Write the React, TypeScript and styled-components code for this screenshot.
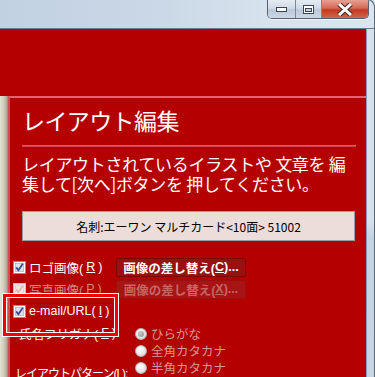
import React from "react";
import styled, { createGlobalStyle } from "styled-components";

const GlobalStyle = createGlobalStyle`
  html, body { margin: 0; padding: 0; overflow: hidden; background: #dbe5ef; }
  body { font-family: "Noto Sans CJK JP", "Noto Sans", sans-serif; }
  * { box-sizing: border-box; }
`;

const RED = "#b50000";
const UI_FONT = `"Liberation Sans", "Noto Sans CJK JP", sans-serif`;

const Window = styled.div`
  position: relative;
  width: 375px;
  height: 378px;
  margin-top: -1px;
  display: flex;
  flex-direction: column;
  background: linear-gradient(90deg, #c2d1e2 0%, #c9d7e6 40%, #d8e3ee 75%, #dbe5ef 100%);
  border-top-right-radius: 8px;
  border-right: 1px solid #5a6978;
  border-top: 1px solid #5a6978;
  overflow: hidden;
`;

const TitleBar = styled.div`
  flex-shrink: 0;
  height: 29px;
  display: flex;
  justify-content: flex-end;
  align-items: flex-start;
  padding-right: 5px;
  border-bottom: 1px solid #6d7b89;
`;

const CaptionGroup = styled.div`
  display: flex;
  height: 19px;
  border: 1px solid #58626e;
  border-top: none;
  border-radius: 0 0 5px 5px;
  overflow: hidden;
  box-shadow: 0 1px 0 rgba(255, 255, 255, 0.6);
`;

const CaptionButton = styled.div<{ $w: number; $close?: boolean }>`
  width: ${(p) => p.$w}px;
  height: 100%;
  display: flex;
  align-items: center;
  justify-content: center;
  background: ${(p) =>
    p.$close
      ? "linear-gradient(180deg, #e8a192 0%, #d46a55 45%, #c23a22 55%, #d2644a 100%)"
      : "linear-gradient(180deg, #e4ebf3 0%, #d0dbe7 45%, #bac8d8 55%, #cdd8e5 100%)"};
  & + & {
    border-left: 1px solid #7b8896;
  }
`;

const Body = styled.div`
  flex: 1;
  min-height: 0;
  display: flex;
  overflow: hidden;
`;

const Client = styled.div`
  width: 367px;
  display: flex;
  flex-direction: column;
  background: ${RED};
  border-right: 1px solid #8a9aab;
`;

const Frame = styled.div`
  flex: 1;
  background: linear-gradient(180deg, #d6e1ec 0%, #d6e1ec 55%, #c4d3e2 60%, #c8d6e4 100%);
`;

const TopBand = styled.div`
  flex-shrink: 0;
  height: 67px;
`;

const Lower = styled.div`
  flex: 1;
  display: flex;
`;

const Strip = styled.div`
  width: 8px;
  flex-shrink: 0;
  background: linear-gradient(90deg, #e3e1d4 0%, #d4d1c0 40%, #b9b5a0 75%, #8f8b78 100%);
`;

const Panel = styled.div`
  flex: 1;
  display: flex;
  flex-direction: column;
  border-top: 2px solid #e2646c;
  border-left: 2px solid #d84a52;
  color: #fff;
`;

const Title = styled.div`
  font-size: 23px;
  line-height: 28px;
  margin: 8px 0 0 12px;
  letter-spacing: -0.6px;
`;

const Separator = styled.div`
  height: 2px;
  margin: 11px 10px 0 12px;
  background: linear-gradient(180deg, #e0656a 0%, #c83a40 100%);
`;

const Description = styled.div`
  font-size: 17px;
  line-height: 20px;
  margin: 7px 10px 0 12px;
  letter-spacing: -0.3px;
  white-space: nowrap;
`;

const NameBox = styled.div`
  flex-shrink: 0;
  height: 30px;
  margin: 17px 11px 0 12px;
  background: #ecdcda;
  border: 1px solid #9c9c9c;
  color: #000;
  font-size: 12px;
  display: flex;
  align-items: center;
  justify-content: center;
`;

const Options = styled.div`
  display: flex;
  flex-direction: column;
  margin: 15px 0 0 3px;
`;

const Row = styled.div`
  flex-shrink: 0;
  height: 22px;
  display: flex;
  align-items: center;
`;

const CheckLabel = styled.label<{ $disabled?: boolean }>`
  display: flex;
  align-items: center;
  gap: 3px;
  width: 103px;
  font-family: ${UI_FONT};
  font-size: 12.5px;
  color: ${(p) => (p.$disabled ? "#d08a8a" : "#fff")};
  white-space: nowrap;
`;

const AccessKey = styled.span`
  text-decoration: underline;
`;

const ActionButton = styled.div<{ $disabled?: boolean }>`
  width: 130px;
  height: 19px;
  display: flex;
  align-items: center;
  justify-content: center;
  background: ${(p) => (p.$disabled ? "#a81414" : "#981010")};
  border: 1px solid ${(p) => (p.$disabled ? "#9a1010" : "#7c0606")};
  border-radius: 2px;
  color: ${(p) => (p.$disabled ? "#c86464" : "#fff")};
  font-family: ${UI_FONT};
  font-weight: bold;
  font-size: 12.5px;
  white-space: nowrap;
`;

const BottomArea = styled.div`
  display: grid;
  grid-template-columns: 103px auto;
  column-gap: 19px;
  align-items: start;
`;

const LeftColumn = styled.div`
  display: flex;
  flex-direction: column;
`;

const RadioList = styled.div`
  display: flex;
  flex-direction: column;
  padding-top: 3px;
`;

const RadioRow = styled.div`
  height: 17px;
  line-height: 17px;
  display: flex;
  align-items: center;
  gap: 4px;
  font-size: 12.5px;
  color: #d49a9a;
  white-space: nowrap;
`;

const RadioDot = styled.span<{ $checked?: boolean }>`
  width: 12px;
  height: 12px;
  border-radius: 50%;
  border: 1px solid #b4b4b4;
  background: radial-gradient(circle at 40% 35%, #ffffff 0%, #ececec 45%, #cfcfcf 100%);
  display: flex;
  align-items: center;
  justify-content: center;
  &::after {
    content: "";
    display: ${(p) => (p.$checked ? "block" : "none")};
    width: 6px;
    height: 6px;
    border-radius: 50%;
    background: radial-gradient(circle at 40% 35%, #c8c8c8 0%, #8e8e8e 100%);
  }
`;

const PatternLabel = styled.div`
  font-family: ${UI_FONT};
  font-size: 12px;
  line-height: 16px;
  margin: 22px 0 0 2px;
  letter-spacing: -1px;
  white-space: nowrap;
`;

const Highlight = styled.div`
  position: absolute;
  left: 3px;
  top: 294px;
  width: 115px;
  height: 42px;
  border: 3px solid #f00000;
  box-shadow: inset 0 0 0 1px #ffffff, 0 0 0 1px #ffffff;
`;

const CheckBox: React.FC<{ disabled?: boolean }> = ({ disabled }) => (
  <svg width="13" height="13" viewBox="0 0 13 13">
    <rect x="0.5" y="0.5" width="12" height="12" fill={disabled ? "#f2e6e6" : "#ffffff"} stroke={disabled ? "#d0b8b8" : "#8e8f8f"} />
    <rect x="2.5" y="2.5" width="8" height="8" fill={disabled ? "#efe6e6" : "#dfe4ea"} stroke={disabled ? "#e2d4d4" : "#b9c3ce"} />
    <path d="M3.2 6.4 L5.4 9.2 L9.8 2.8" fill="none" stroke={disabled ? "#d2bcbc" : "#3a4f8c"} strokeWidth="1.8" />
  </svg>
);

export default function App() {
  return (
    <>
      <GlobalStyle />
      <Window>
        <TitleBar>
          <CaptionGroup>
            <CaptionButton $w={27}>
              <svg width="11" height="5" viewBox="0 0 11 5">
                <rect x="0.5" y="0.5" width="10" height="4" fill="#fff" stroke="#3b4450" />
              </svg>
            </CaptionButton>
            <CaptionButton $w={26}>
              <svg width="11" height="9" viewBox="0 0 11 9">
                <rect x="0.5" y="0.5" width="10" height="8" fill="#fff" stroke="#3b4450" />
                <rect x="2.5" y="3.5" width="6" height="3" fill="#c7d3e0" stroke="#3b4450" />
              </svg>
            </CaptionButton>
            <CaptionButton $w={47} $close>
              <svg width="16" height="13" viewBox="0 0 16 13">
                <path d="M2 1 L14 12 M14 1 L2 12" stroke="#3a2a28" strokeWidth="5" />
                <path d="M2 1 L14 12 M14 1 L2 12" stroke="#ffffff" strokeWidth="3" />
              </svg>
            </CaptionButton>
          </CaptionGroup>
        </TitleBar>
        <Body>
          <Client>
            <TopBand />
            <Lower>
              <Strip />
              <Panel>
                <Title>レイアウト編集</Title>
                <Separator />
                <Description>
                  レイアウトされているイラストや 文章を 編
                  <br />
                  集して[次へ]ボタンを 押してください。
                </Description>
                <NameBox>名刺:エーワン マルチカード&lt;10面&gt; 51002</NameBox>
                <Options>
                  <Row>
                    <CheckLabel>
                      <CheckBox />
                      ロゴ画像(<AccessKey>R</AccessKey>)
                    </CheckLabel>
                    <ActionButton>
                      画像の差し替え(<AccessKey>C</AccessKey>)...
                    </ActionButton>
                  </Row>
                  <Row>
                    <CheckLabel $disabled>
                      <CheckBox disabled />
                      写真画像(<AccessKey>P</AccessKey>)
                    </CheckLabel>
                    <ActionButton $disabled>
                      画像の差し替え(<AccessKey>X</AccessKey>)...
                    </ActionButton>
                  </Row>
                  <Row>
                    <CheckLabel>
                      <CheckBox />
                      e-mail/URL(<AccessKey>I</AccessKey>)
                    </CheckLabel>
                  </Row>
                  <BottomArea>
                    <LeftColumn>
                      <Row>
                        <CheckLabel>
                          <CheckBox />
                          氏名フリガナ(<AccessKey>F</AccessKey>)
                        </CheckLabel>
                      </Row>
                      <PatternLabel>レイアウトパターン(L):</PatternLabel>
                    </LeftColumn>
                    <RadioList>
                      <RadioRow>
                        <RadioDot $checked />
                        ひらがな
                      </RadioRow>
                      <RadioRow>
                        <RadioDot />
                        全角カタカナ
                      </RadioRow>
                      <RadioRow>
                        <RadioDot />
                        半角カタカナ
                      </RadioRow>
                    </RadioList>
                  </BottomArea>
                </Options>
              </Panel>
            </Lower>
          </Client>
          <Frame />
        </Body>
        <Highlight />
      </Window>
    </>
  );
}
